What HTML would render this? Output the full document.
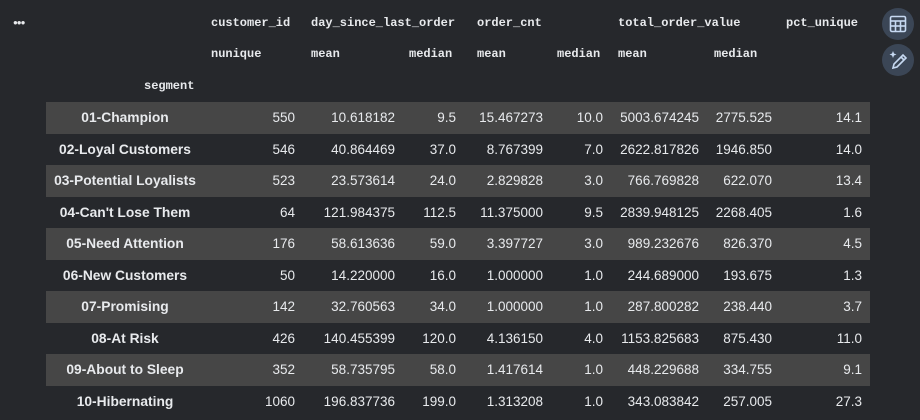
<!DOCTYPE html>
<html><head><style>
body{margin:0;width:920px;height:420px;background:#26282c;overflow:hidden;position:relative;font-family:"Liberation Sans",Arial,sans-serif;color:#e8eaed}
.h{position:absolute;font-family:"Liberation Mono",monospace;font-weight:bold;font-size:12px;color:#e8eaed;white-space:pre}
.row{position:absolute;left:46px;width:824px;height:31.5px}
.row.o{background:#464646}
.c{position:absolute;top:0;line-height:31.5px;font-size:13.5px;text-align:right;white-space:nowrap}
.seg{position:absolute;left:0;width:158px;text-align:center;line-height:31.5px;font-weight:bold;font-size:13.8px;white-space:nowrap}
.btn{position:absolute;left:882px;width:32px;height:32px;border-radius:50%;background:#3b4656}
</style></head><body>
<div class="h" style="left:13px;top:19px;font-size:8px;letter-spacing:-1px">●●●</div>
<div class="h" style="left:211px;top:16px">customer_id</div>
<div class="h" style="left:311px;top:16px">day_since_last_order</div>
<div class="h" style="left:477px;top:16px">order_cnt</div>
<div class="h" style="left:618px;top:16px">total_order_value</div>
<div class="h" style="left:786px;top:16px">pct_unique</div>
<div class="h" style="left:211px;top:47px">nunique</div>
<div class="h" style="left:311px;top:47px">mean</div>
<div class="h" style="left:409px;top:47px">median</div>
<div class="h" style="left:477px;top:47px">mean</div>
<div class="h" style="left:557px;top:47px">median</div>
<div class="h" style="left:618px;top:47px">mean</div>
<div class="h" style="left:714px;top:47px">median</div>
<div class="h" style="left:144px;top:79px">segment</div>
<div class="btn" style="top:8px"><svg width="32" height="32" viewBox="0 0 32 32" fill="none" stroke="#c7d9f2" stroke-width="1.6"><rect x="8.5" y="8.5" width="15" height="15" rx="1.5"/><line x1="8.5" y1="13" x2="23.5" y2="13"/><line x1="8.5" y1="18" x2="23.5" y2="18"/><line x1="13.5" y1="13" x2="13.5" y2="23.5"/><line x1="18.5" y1="13" x2="18.5" y2="23.5"/></svg></div>
<div class="btn" style="top:44px"><svg width="32" height="32" viewBox="0 0 32 32" fill="none" stroke="#c7d9f2" stroke-width="1.6"><path d="M11 24l1-4 9-9 3 3-9 9z"/><path d="M19 13l3 3"/><path d="M11 7l1 2.5 2.5 1-2.5 1-1 2.5-1-2.5-2.5-1 2.5-1z" fill="#c7d9f2" stroke="none"/></svg></div>
<div id="t"></div>
<script>
var d=[["01-Champion","550","10.618182","9.5","15.467273","10.0","5003.674245","2775.525","14.1"],
["02-Loyal Customers","546","40.864469","37.0","8.767399","7.0","2622.817826","1946.850","14.0"],
["03-Potential Loyalists","523","23.573614","24.0","2.829828","3.0","766.769828","622.070","13.4"],
["04-Can't Lose Them","64","121.984375","112.5","11.375000","9.5","2839.948125","2268.405","1.6"],
["05-Need Attention","176","58.613636","59.0","3.397727","3.0","989.232676","826.370","4.5"],
["06-New Customers","50","14.220000","16.0","1.000000","1.0","244.689000","193.675","1.3"],
["07-Promising","142","32.760563","34.0","1.000000","1.0","287.800282","238.440","3.7"],
["08-At Risk","426","140.455399","120.0","4.136150","4.0","1153.825683","875.430","11.0"],
["09-About to Sleep","352","58.735795","58.0","1.417614","1.0","448.229688","334.755","9.1"],
["10-Hibernating","1060","196.837736","199.0","1.313208","1.0","343.083842","257.005","27.3"]];
var r=[295,395,456,543,603,699,772,862],h="";
d.forEach(function(a,i){h+='<div class="row'+(i%2==0?' o':'')+'" style="top:'+(102+i*31.5)+'px"><div class="seg">'+a[0]+'</div>';
for(var j=0;j<8;j++)h+='<div class="c" style="right:'+(870-r[j])+'px">'+a[j+1]+'</div>';h+='</div>';});
document.getElementById("t").innerHTML=h;
</script>
</body></html>
